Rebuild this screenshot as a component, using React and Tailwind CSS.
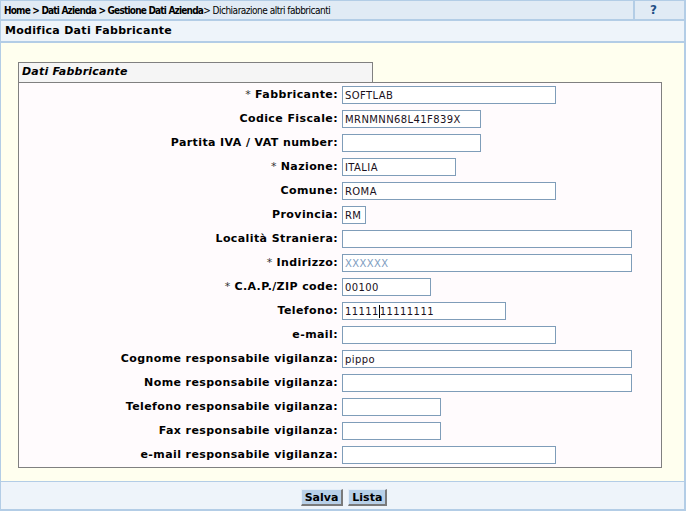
import React from 'react';

const rows = [
  { label: 'Fabbricante:', req: true, w: 'w-[214px]', value: 'SOFTLAB' },
  { label: 'Codice Fiscale:', w: 'w-[139px]', value: 'MRNMNN68L41F839X' },
  { label: 'Partita IVA / VAT number:', w: 'w-[139px]' },
  { label: 'Nazione:', req: true, w: 'w-[114px]', value: 'ITALIA' },
  { label: 'Comune:', w: 'w-[214px]', value: 'ROMA' },
  { label: 'Provincia:', w: 'w-[24px]', value: 'RM' },
  { label: 'Località Straniera:', w: 'w-[290px]' },
  { label: 'Indirizzo:', req: true, w: 'w-[290px]', value: 'XXXXXX', light: true },
  { label: 'C.A.P./ZIP code:', req: true, w: 'w-[89px]', value: '00100' },
  { label: 'Telefono:', w: 'w-[164px]', value: '11111', after: '11111111' },
  { label: 'e-mail:', w: 'w-[214px]' },
  { label: 'Cognome responsabile vigilanza:', w: 'w-[290px]', value: 'pippo' },
  { label: 'Nome responsabile vigilanza:', w: 'w-[290px]' },
  { label: 'Telefono responsabile vigilanza:', w: 'w-[99px]' },
  { label: 'Fax responsabile vigilanza:', w: 'w-[99px]' },
  { label: 'e-mail responsabile vigilanza:', w: 'w-[214px]' },
];

function Row({ r }) {
  return (
    <div className="h-[24px] flex items-center">
      <div className="w-[319px] text-right text-[11px] font-bold tracking-[0.4px] whitespace-nowrap">
        {r.req && <span className="font-normal text-[#333]">* </span>}
        {r.label}
      </div>
      <div
        className={`ml-[4px] h-[18px] ${r.w} border border-[#7f9db9] bg-white flex items-center pl-[2px] text-[10px] tracking-[0.4px] whitespace-nowrap overflow-hidden ${r.light ? 'text-[#7d9cc0]' : 'text-[#1a1020]'}`}
      >
        {r.value}
        {r.after !== undefined && (
          <>
            <span className="inline-block w-px h-[13px] bg-black" />
            {r.after}
          </>
        )}
      </div>
    </div>
  );
}

const btn =
  'h-[17px] px-[3px] bg-[#b8d0e8] border-t border-l border-r-2 border-b-2 border-t-[#e4eef8] border-l-[#e4eef8] border-r-[#7a7a7a] border-b-[#7a7a7a] text-[11px] font-bold leading-none';

export default function App() {
  return (
    <div className="w-[686px] h-[511px] flex flex-col border-t border-l border-r-2 border-b-2 border-[#b3cde6] bg-[#ffffef] font-['DejaVu_Sans',sans-serif] text-black">
      <div className="h-[20px] flex bg-[#e1ebf5] border-b-2 border-[#b3cde6]">
        <div className="flex-1 flex items-center pl-[3px] text-[10px] whitespace-nowrap font-['DejaVu_Sans_Condensed','DejaVu_Sans',sans-serif] [font-stretch:condensed]">
          <span className="font-bold tracking-[-0.8px]">Home &gt; Dati Azienda &gt; Gestione Dati Azienda</span>
          <span className="tracking-[-0.5px]">&gt; Dichiarazione altri fabbricanti</span>
        </div>
        <div className="w-[51px] border-l-2 border-[#b3cde6] flex items-center pl-[15px] font-bold text-[12px] text-[#1f4f85]">
          ?
        </div>
      </div>
      <div className="h-[22px] bg-[#eef4fa] border-b-2 border-[#b3cde6] flex items-center pl-[4px] font-bold text-[11px] tracking-[0.3px]">
        Modifica Dati Fabbricante
      </div>
      <div className="flex-1 pl-[17px] pt-[19px]">
        <div className="w-[355px] h-[20px] border-t border-l border-r border-[#808080] bg-[#f5f5f5] flex items-center pl-[3px] text-[11px] font-bold italic tracking-[0.2px]">
          Dati Fabbricante
        </div>
        <div className="w-[644px] border border-[#808080] bg-[#fffbfd]">
          {rows.map((r) => (
            <Row key={r.label} r={r} />
          ))}
        </div>
      </div>
      <div className="h-[28px] border-t border-[#b3cde6] bg-[#eef4fa] flex items-center justify-center gap-[5px] pt-[4px] pl-[3px]">
        <button className={btn}>Salva</button>
        <button className={btn}>Lista</button>
      </div>
    </div>
  );
}
